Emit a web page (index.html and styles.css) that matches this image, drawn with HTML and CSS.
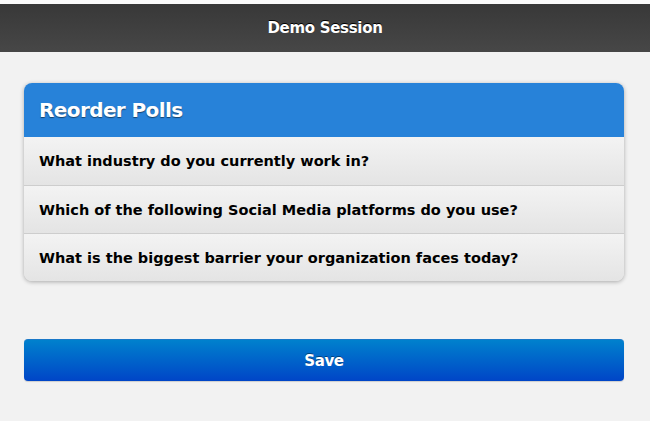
FILE: index.html
```html
<!DOCTYPE html>
<html>
<head>
<meta charset="utf-8">
<link rel="stylesheet" href="styles.css">
</head>
<body>
<div class="topline"></div>
<header class="bar">Demo Session</header>
<main class="content">
  <section class="card">
    <h1 class="card-title">Reorder Polls</h1>
    <ul class="polls">
      <li class="poll">What industry do you currently work in?</li>
      <li class="poll">Which of the following Social Media platforms do you use?</li>
      <li class="poll">What is the biggest barrier your organization faces today?</li>
    </ul>
  </section>
  <button class="save">Save</button>
</main>
</body>
</html>
```
FILE: styles.css
```css
html, body {
  margin: 0;
  padding: 0;
}
body {
  background: #f2f2f2;
  font-family: "DejaVu Sans", "Liberation Sans", sans-serif;
  width: 650px;
  height: 421px;
  overflow: hidden;
}
.topline {
  height: 4px;
  background: #fafafa;
}
.bar {
  height: 48px;
  background: linear-gradient(#383838, #474747);
  color: #fff;
  font-weight: bold;
  font-size: 15px;
  display: flex;
  align-items: center;
  justify-content: center;
  padding-bottom: 1px;
  box-sizing: border-box;
  text-shadow: 0 -1px 0 #000;
  letter-spacing: -0.3px;
}
.content {
  padding: 31px 26px 0 24px;
  display: flex;
  flex-direction: column;
}
.card {
  border-radius: 8px;
  overflow: hidden;
  box-shadow: 0 1px 4px rgba(0,0,0,0.3);
  background: #ececec;
}
.card-title {
  margin: 0;
  height: 54px;
  background: #2782d9;
  color: #fff;
  font-size: 20px;
  font-weight: bold;
  display: flex;
  align-items: center;
  padding-left: 15px;
  text-shadow: 0 1px 1px rgba(0,0,0,0.5);
  letter-spacing: -0.6px;
}
.polls {
  list-style: none;
  margin: 0;
  padding: 0;
}
.poll {
  height: 47px;
  display: flex;
  align-items: center;
  padding-left: 15px;
  font-size: 14.5px;
  font-weight: bold;
  color: #000;
  background: linear-gradient(#f3f3f3, #e4e4e4);
  border-top: 1px solid #cdcdcd;
  letter-spacing: 0;
}
.poll:first-child {
  border-top: none;
  height: 48px;
}
.save {
  margin-top: 58px;
  height: 42px;
  border: none;
  border-top: 1px solid #1a78c8;
  border-radius: 4px;
  background: linear-gradient(#0081cd, #0045c7);
  color: #fff;
  font-family: "DejaVu Sans", "Liberation Sans", sans-serif;
  font-weight: bold;
  font-size: 15px;
  text-shadow: 0 -1px 0 rgba(0,0,0,0.4);
  letter-spacing: -0.4px;
  box-shadow: 0 1px 1px rgba(0,0,0,0.15);
}
```
